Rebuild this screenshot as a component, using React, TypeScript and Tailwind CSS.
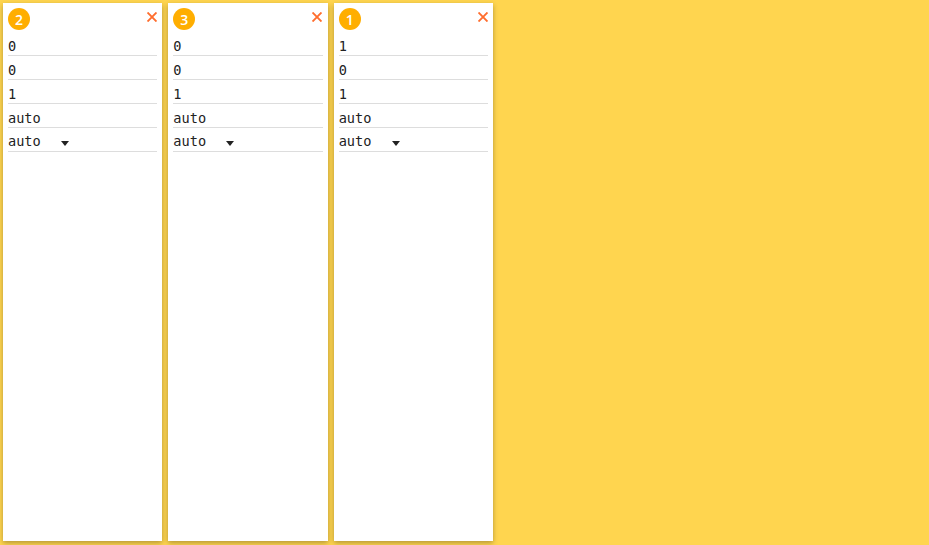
const panels = [
  { id: 2, values: ["0", "0", "1", "auto"] },
  { id: 3, values: ["0", "0", "1", "auto"] },
  { id: 1, values: ["1", "0", "1", "auto"] },
];

function Panel({ id, values }: { id: number; values: string[] }) {
  return (
    <div className="mx-[3px] mt-[3px] flex h-[538px] w-[159.33px] flex-col bg-white px-[5px] pt-[5px] shadow-[0_2px_5px_rgba(0,0,0,0.3)]">
      <div className="flex h-[24px] items-start justify-between">
        <div className="flex h-[22px] w-[22px] items-center justify-center rounded-full bg-[#ffae00] font-['Open_Sans',sans-serif] text-[14px] font-semibold text-white">
          {id}
        </div>
        <svg className="mt-[4px] mr-[0.2px]" width="10" height="10" viewBox="0 0 10 10">
          <path d="M0.5 0.5 9.5 9.5M9.5 0.5 0.5 9.5" stroke="#ff6d2d" strokeWidth="1.9" fill="none" />
        </svg>
      </div>
      {values.map((v, i) => (
        <input
          key={i}
          readOnly
          value={v}
          className="h-[24px] w-full border-b border-[#dddddd] pt-[5px] font-['DejaVu_Sans_Mono',monospace] text-[13.6px] leading-none text-[#222222] outline-none"
        />
      ))}
      <div className="relative h-[24px] border-b border-[#dddddd]">
        <select className="h-[23px] w-[68px] appearance-none bg-transparent font-['DejaVu_Sans_Mono',monospace] text-[13.6px] text-[#222222] outline-none">
          <option>auto</option>
        </select>
        <svg className="absolute left-[53px] top-[13px]" width="8" height="5" viewBox="0 0 8 5">
          <path d="M0 0h8L4 5z" fill="#222222" />
        </svg>
      </div>
    </div>
  );
}

export default function App() {
  return (
    <div className="flex h-[545px] w-[929px] overflow-hidden bg-[#ffd54f]">
      {panels.map((p) => (
        <Panel key={p.id} id={p.id} values={p.values} />
      ))}
    </div>
  );
}
